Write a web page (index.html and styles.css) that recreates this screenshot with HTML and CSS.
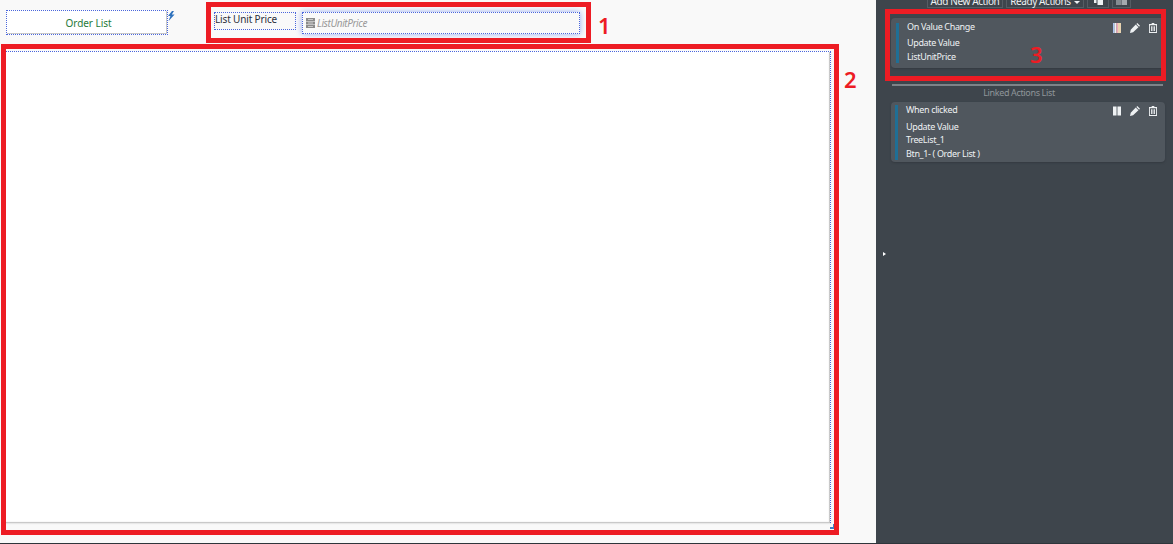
FILE: index.html
```html
<!DOCTYPE html>
<html lang="en">
<head>
    <meta charset="UTF-8">
    <title>Action Designer</title>
    <link rel="stylesheet" href="styles.css">
</head>
<body>

<div class="page">
    <!-- Design canvas -->
    <div class="canvas">
        <div class="top-row">
            <button class="order-button">Order List</button>
            <svg class="bolt" viewBox="0 0 8 10" width="8" height="10"><path d="M5 0 L1 5 L3.4 5 L1.6 10 L7.6 3.6 L4.8 3.6 L7 0 Z"/></svg>
            <div class="field-label">List Unit Price</div>
            <div class="field-input">
                <svg class="db-icon" viewBox="0 0 9 10" width="9" height="10"><path d="M0 0h9v3H0zM0 3.6h9v3H0zM0 7h9v3H0z"/><path class="db-line" d="M2 1.5h5M2 5h5M2 8.5h5"/></svg>
                <span>ListUnitPrice</span>
            </div>
        </div>
        <div class="tree-panel">
            <svg class="resize-grip" viewBox="0 0 5 5" width="5" height="5"><path d="M3 0h2v5H0V3h3z"/></svg>
        </div>
    </div>

    <!-- Actions sidebar -->
    <div class="sidebar">
        <div class="toolbar">
            <div class="tool tool-add">Add New Action</div>
            <div class="tool tool-ready">Ready Actions <span class="caret"></span></div>
            <div class="tool tool-copy">
                <svg viewBox="0 0 11 9" width="11" height="9"><path fill="#eef1f3" d="M1 0h5v2H3.500v5H1zM4.500 3H10v6H4.500z"/></svg>
            </div>
            <div class="tool tool-paste">
                <svg viewBox="0 0 11 9" width="11" height="9"><path fill="#858b91" d="M0 0h5v9H0z"/><path fill="#a4a9ae" d="M5.500 0H11v9H5.500z"/></svg>
            </div>
        </div>

        <div class="card card-first">
            <div class="card-bar"></div>
            <div class="card-text">
                <div class="card-title">On Value Change</div>
                <div class="card-line">Update Value</div>
                <div class="card-line">ListUnitPrice</div>
            </div>
            <div class="card-icons">
                <svg viewBox="0 0 8 10" width="8" height="10"><path fill="#a9c3f2" d="M0 0h1.500v10H0z"/><path d="M1.500 0H3.500v10H1.500z"/><path fill="#f0a9b8" d="M3.500 0H5v10H3.500z"/><path fill="#e8d3b0" d="M5 0h3v10H5z"/></svg>
                <svg viewBox="0 0 11 11" width="10" height="10"><path d="M8 0 L11 3 L10 4 L7 1 Z M6.300 1.700 L9.300 4.700 L3.400 10.200 L0 11 L0.800 7.400 Z"/></svg>
                <svg viewBox="0 0 9 11" width="8" height="10"><path fill-rule="evenodd" d="M3 0h3v1h3v10H0V1h3zM1 2.500v7.500h7V2.500zM2.300 3.500h1v5.500h-1zM4 3.500h1v5.500H4zM5.700 3.500h1v5.500h-1z"/></svg>
            </div>
        </div>

        <div class="divider"></div>
        <div class="list-title">Linked Actions List</div>

        <div class="card card-second">
            <div class="card-bar"></div>
            <div class="card-text">
                <div class="card-title">When clicked</div>
                <div class="card-line">Update Value</div>
                <div class="card-line">TreeList_1</div>
                <div class="card-line">Btn_1- ( Order List )</div>
            </div>
            <div class="card-icons">
                <svg viewBox="0 0 9 10" width="8" height="10"><path d="M0 0h4v10H0zM5 0h4v10H5z"/></svg>
                <svg viewBox="0 0 11 11" width="10" height="10"><path d="M8 0 L11 3 L10 4 L7 1 Z M6.300 1.700 L9.300 4.700 L3.400 10.200 L0 11 L0.800 7.400 Z"/></svg>
                <svg viewBox="0 0 9 11" width="8" height="10"><path fill-rule="evenodd" d="M3 0h3v1h3v10H0V1h3zM1 2.500v7.500h7V2.500zM2.300 3.500h1v5.500h-1zM4 3.500h1v5.500H4zM5.700 3.500h1v5.500h-1z"/></svg>
            </div>
        </div>

        <div class="toggle-arrow"></div>
    </div>
</div>

<!-- Red annotations over the screenshot -->
<div class="mark mark-1"></div>
<div class="mark mark-2"></div>
<div class="mark mark-3"></div>
<div class="mark-num num-1">1</div>
<div class="mark-num num-2">2</div>
<div class="mark-num num-3">3</div>

</body>
</html>
```

FILE: styles.css
```css
body, html {
    height: 100%;
    margin: 0;
    font-family: 'Noto Sans', 'Open Sans', sans-serif;
    background-color: #2f353b;
    overflow: hidden;
}

.page {
    display: flex;
    height: 543px;
}

/* Design canvas */
.canvas {
    width: 876px;
    box-sizing: border-box;
    padding: 10px 0 0 6px;
    background-color: #f9f9f9;
}

.top-row {
    display: flex;
    align-items: flex-start;
    height: 41px;
}

.order-button {
    width: 162px;
    height: 25px;
    padding: 0 0 0 3px;
    background: #fff;
    border: 1px dotted #4a66dc;
    box-shadow: inset -1px -1px 0 #c8c8c8;
    color: #1f7a3a;
    font-family: inherit;
    font-size: 10px;
    letter-spacing: -0.05px;
}

.bolt {
    margin: 1px 0 0 -1px;
    fill: #2f72bd;
}

.field-label {
    width: 82px;
    height: 18px;
    margin: 2px 0 0 39px;
    border: 1px dotted #4a66dc;
    box-sizing: border-box;
    color: #2b2f3a;
    font-size: 10px;
    letter-spacing: -0.15px;
    line-height: 13px;
}

.field-input {
    display: flex;
    align-items: center;
    width: 278px;
    height: 22px;
    box-sizing: border-box;
    margin: 2px 0 0 6px;
    padding-left: 3px;
    border: 1px dotted #4a66dc;
    background: #f9f9f9;
    box-shadow: 0 0 6px #97acf3;
    color: #999;
    font-size: 10px;
    font-style: italic;
    letter-spacing: -0.4px;
}

.db-icon {
    margin-right: 2px;
    fill: #8b8b8b;
}

.db-line {
    stroke: #c9c9c9;
    stroke-width: 1;
    fill: none;
}

.tree-panel {
    position: relative;
    width: 825px;
    height: 472px;
    box-sizing: border-box;
    background: #fff;
    border-top: 1px dotted #4a66dc;
    border-right: 1px dotted #4a66dc;
    box-shadow: inset -1px -1px 1px #c4c4c4, 0 1px 1px #e8e8e8;
}

.resize-grip {
    position: absolute;
    right: -5px;
    bottom: -6px;
    fill: #3f7fc4;
}

/* Actions sidebar */
.sidebar {
    position: relative;
    width: 297px;
    box-sizing: border-box;
    padding-left: 15px;
    background-color: #3e454c;
    color: #eef1f3;
    font-size: 9px;
    letter-spacing: -0.35px;
}

.toolbar {
    display: flex;
    gap: 3px;
    height: 18px;
    margin: -10px 0 0 36px;
}

.tool {
    display: flex;
    align-items: flex-end;
    justify-content: center;
    height: 18px;
    box-sizing: border-box;
    border: 1px solid #555c63;
    border-top: 0;
    color: #eef1f3;
    font-size: 10px;
    letter-spacing: -0.4px;
    line-height: 11px;
    white-space: pre;
}

.tool-add {
    width: 76px;
}

.tool-ready {
    width: 78px;
}

.tool-copy {
    width: 22px;
    padding-bottom: 2px;
}

.tool-paste {
    width: 19px;
    padding-bottom: 2px;
}

.caret {
    align-self: center;
    margin: 8px 0 0 1px;
    border-top: 3px solid #eef1f3;
    border-left: 3px solid transparent;
    border-right: 3px solid transparent;
}

.card {
    display: flex;
    width: 274px;
    box-sizing: border-box;
    background-color: #50575e;
    border-radius: 4px;
    box-shadow: 0 1px 2px #343a40;
}

.card-first {
    height: 50px;
    margin-top: 10px;
    padding: 5px 8px 5px 5px;
}

.card-second {
    height: 60px;
    padding: 3px 8px 2px 4px;
}

.card-bar {
    width: 3px;
    flex: none;
    background-color: #1f6f96;
}

.card-text {
    flex: 1;
    padding-left: 8px;
    line-height: 14px;
}

.card-first .card-text {
    margin-top: -3px;
}

.card-second .card-text {
    margin-top: -2px;
}

.card-title {
    margin-bottom: 2px;
}

.card-second .card-title {
    margin-bottom: 3px;
}

.card-line {
    height: 14px;
}

.card-second .card-line + .card-line {
    margin-top: -1px;
    height: 14px;
}

.card-second .card-line:last-child {
    margin-top: 0;
}

.card-icons {
    display: flex;
    gap: 9px;
    padding-top: 1px;
    fill: #eef1f3;
}

.card-first .card-icons {
    padding: 0;
}

.divider {
    width: 271px;
    height: 2px;
    margin: 16px 0 0 1px;
    background-color: #7d8388;
}

.list-title {
    width: 254px;
    height: 16px;
    margin-left: 1px;
    color: #8f959a;
    line-height: 13px;
    text-align: center;
}

.toggle-arrow {
    position: absolute;
    left: 7px;
    top: 252px;
    border-left: 3px solid #fff;
    border-top: 2px solid transparent;
    border-bottom: 2px solid transparent;
}

/* Red annotations */
.mark {
    position: absolute;
    box-sizing: border-box;
    border: 5px solid #ed1c24;
}

.mark-1 {
    left: 206px;
    top: 2px;
    width: 385px;
    height: 41px;
}

.mark-2 {
    left: 1px;
    top: 44px;
    width: 838px;
    height: 491px;
}

.mark-3 {
    left: 885px;
    top: 9px;
    width: 281px;
    height: 72px;
}

.mark-num {
    position: absolute;
    color: #ed1c24;
    font-size: 22px;
    font-weight: 600;
    line-height: 24px;
}

.num-1 {
    left: 598px;
    top: 13px;
}

.num-2 {
    left: 844px;
    top: 67px;
}

.num-3 {
    left: 1030px;
    top: 42px;
}
```
